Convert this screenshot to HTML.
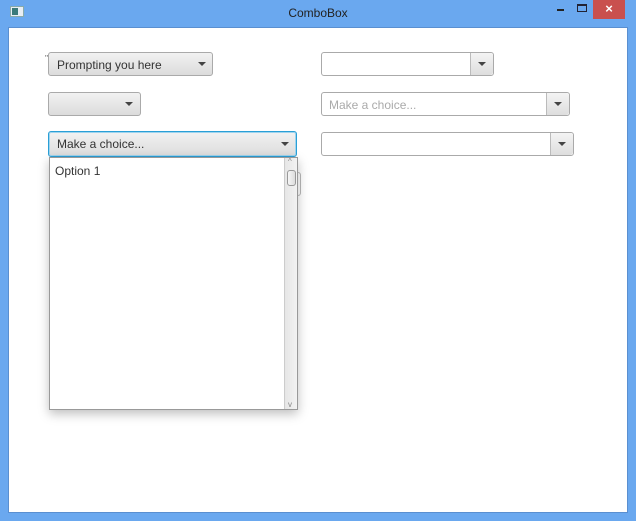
<!DOCTYPE html>
<html><head><meta charset="utf-8"><style>
*{margin:0;padding:0;box-sizing:border-box}
body{width:636px;height:521px;background:#6aa8ef;position:relative;overflow:hidden;font-family:"Liberation Sans",sans-serif;}
.client{position:absolute;left:8px;top:27px;width:620px;height:486px;background:#fff;border:1px solid #5a8fd0;}
.title{position:absolute;left:0;top:0;width:636px;height:27px;text-align:center;font-size:12px;line-height:27px;color:#222;}
.cb{position:absolute;height:24px;border:1px solid #aaa;border-radius:3px;background:linear-gradient(#f2f2f2,#dcdcdc);font-size:12px;color:#333;line-height:24px;padding-left:8px;}
.arrow{position:absolute;top:9px;width:0;height:0;border-left:4px solid transparent;border-right:4px solid transparent;border-top:4px solid #444;}
.ed{position:absolute;height:24px;border:1px solid #aaa;border-radius:3px;background:#fff;font-size:12px;line-height:24px;padding-left:7px;color:#aaa;}
.btn{position:absolute;top:0;right:0;width:23px;height:22px;border-left:1px solid #bbb;background:linear-gradient(#f4f4f4,#dedede);border-radius:0 3px 3px 0;}
.btn .arrow{left:7px}
</style></head><body>
<div class="title">ComboBox</div>
<div style="position:absolute;left:10px;top:6px;width:14px;height:11px;background:#e8eef4;border:1px solid #8aa"></div>
<div style="position:absolute;left:12px;top:8px;width:6px;height:7px;background:#3a7a7a"></div>
<div style="position:absolute;left:557px;top:9px;width:7px;height:2px;background:#222"></div>
<div style="position:absolute;left:577px;top:4px;width:10px;height:8px;border:1px solid #223;border-top-width:2px"></div>
<div style="position:absolute;left:593px;top:0;width:32px;height:19px;background:#c9504e;color:#fff;font-size:13px;font-weight:bold;text-align:center;line-height:18px">×</div>
<div class="client"></div>
<div style="position:absolute;left:45px;top:54px;font-size:8px;color:#555">''</div>
<div class="cb" style="left:48px;top:52px;width:165px">Prompting you here<div class="arrow" style="left:149px"></div></div>
<div class="cb" style="left:48px;top:92px;width:93px"><div class="arrow" style="left:76px"></div></div>
<div class="cb" style="left:48px;top:131px;width:249px;height:26px;border:1px solid #2a9fd6;box-shadow:0 0 0 1px #9fd4ee inset;line-height:25px">Make a choice...<div class="arrow" style="left:232px;top:10px"></div></div>
<div class="ed" style="left:321px;top:52px;width:173px"><div class="btn"><div class="arrow"></div></div></div>
<div class="ed" style="left:321px;top:92px;width:249px">Make a choice...<div class="btn"><div class="arrow"></div></div></div>
<div class="ed" style="left:321px;top:132px;width:253px"><div class="btn"><div class="arrow"></div></div></div>
<div style="position:absolute;left:49px;top:157px;width:249px;height:253px;background:#fff;border:1px solid #999;box-shadow:0 4px 10px rgba(0,0,0,.25)">
<div style="position:absolute;left:5px;top:6px;font-size:12px;color:#333">Option 1</div>
<div style="position:absolute;right:0;top:0;width:13px;height:251px;background:linear-gradient(90deg,#e6e6e6,#f2f2f2);border-left:1px solid #ccc">
<div style="position:absolute;left:2px;top:12px;width:9px;height:16px;border:1px solid #999;border-radius:3px;background:linear-gradient(90deg,#f6f6f6,#ddd)"></div>
<div style="position:absolute;left:3px;top:-1px;font-size:8px;color:#888">^</div>
<div style="position:absolute;left:3px;bottom:0;font-size:8px;color:#888">v</div>
</div></div>
<div style="position:absolute;left:298px;top:172px;width:3px;height:24px;border:1px solid #aaa;border-left:none;border-radius:0 3px 3px 0"></div>
</body></html>
